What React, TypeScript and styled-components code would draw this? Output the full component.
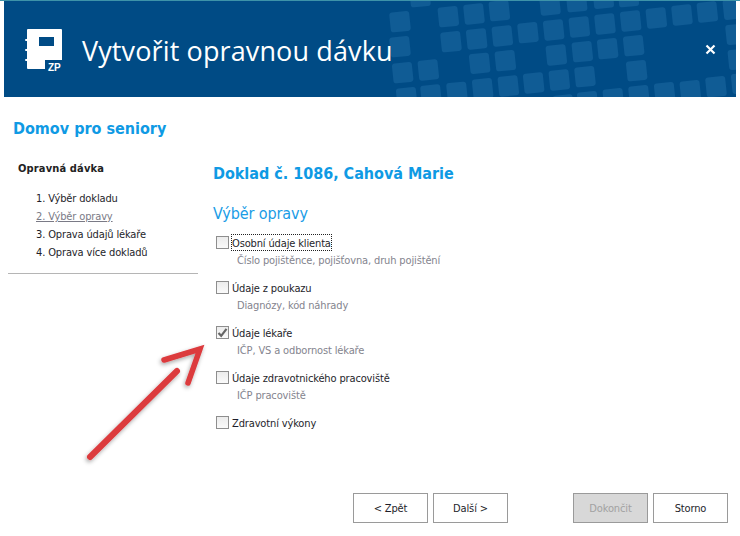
import React from "react";
import styled, { createGlobalStyle } from "styled-components";

const Global = createGlobalStyle`
  html, body { margin: 0; padding: 0; background: #fff; }
  body { font-family: "DejaVu Sans Condensed", "DejaVu Sans", sans-serif; font-size: 11px; letter-spacing: -0.14px; color: #1e1e2a; }
`;

const Page = styled.div`
  position: relative;
  width: 740px;
  height: 536px;
  overflow: hidden;
  background: #fff;
  display: flex;
  flex-direction: column;
`;
const Accent = styled.div`
  height: 1px;
  background: #3d93a9;
  flex: none;
`;
const Header = styled.header`
  position: relative;
  flex: none;
  height: 96px;
  margin: 0 4px;
  background: #004b85;
  display: flex;
  align-items: center;
  padding-left: 21px;
  gap: 17px;
  overflow: hidden;
`;
const Pattern = styled.svg`
  position: absolute;
  left: 0;
  top: -1px;
`;
const Logo = styled.svg`
  position: relative;
  flex: none;
  margin-top: 4px;
`;
const Title = styled.h1`
  position: relative;
  margin: 2px 0 0;
  font: 400 27px "Open Sans", sans-serif;
  letter-spacing: 0.12px;
  color: #fff;
`;
const Close = styled.svg`
  position: absolute;
  right: 20px;
  top: 43px;
`;
const Org = styled.h2`
  margin: 22px 0 0 13px;
  font: 700 16px/20px "DejaVu Sans Condensed", "DejaVu Sans", sans-serif;
  letter-spacing: 0;
  color: #0f9ae4;
`;
const Body = styled.div`
  display: flex;
  padding: 0 8px;
  margin-top: 15px;
`;
const Side = styled.nav`
  width: 190px;
  height: 120px;
  flex: none;
  box-sizing: border-box;
  padding: 8px 0 0 10px;
  border-bottom: 1px solid #b5b5b5;
`;
const SideTitle = styled.div`
  font-weight: 700;
  line-height: 14px;
  letter-spacing: 0.15px;
  color: #222;
`;
const Steps = styled.ol`
  list-style: none;
  margin: 14px 0 0;
  padding: 0 0 0 18px;
`;
const Step = styled.li<{ $active?: boolean }>`
  line-height: 18px;
  height: 18px;
  color: ${(p) => (p.$active ? "#7a7a86" : "#1e1e2a")};
  text-decoration: ${(p) => (p.$active ? "underline" : "none")};
`;
const Main = styled.main`
  margin-left: 15px;
  flex: 1;
  padding-top: 8px;
`;
const DocTitle = styled.h3`
  margin: 0;
  font: 700 16px/24px "DejaVu Sans Condensed", "DejaVu Sans", sans-serif;
  letter-spacing: -0.02px;
  color: #0f9ae4;
`;
const Section = styled.h4`
  margin: 17px 0 0;
  font: 400 16px/22px "DejaVu Sans Condensed", "DejaVu Sans", sans-serif;
  letter-spacing: -0.1px;
  color: #1a9ce6;
`;
const Options = styled.div`
  margin-top: 10px;
  display: flex;
  flex-direction: column;
  gap: 11px;
`;
const Option = styled.div`
  display: grid;
  grid-template-columns: 13px 1fr;
  grid-template-rows: 15px 15px;
  align-content: start;
  column-gap: 3px;
  margin-left: 3px;
  height: 34px;
`;
const Box = styled.span`
  box-sizing: border-box;
  width: 13px;
  height: 13px;
  margin-top: 1px;
  border: 1px solid #8e8e8e;
  background: linear-gradient(#ececec, #fafafa);
  display: flex;
  align-items: center;
  justify-content: center;
`;
const Label = styled.span<{ $focus?: boolean }>`
  justify-self: start;
  line-height: 17px;
  height: 15px;
  outline: ${(p) => (p.$focus ? "1px dotted #222" : "none")};
`;
const Hint = styled.span`
  grid-column: 2;
  margin: 2px 0 0 5px;
  line-height: 17px;
  color: #84848e;
`;
const Footer = styled.footer`
  margin-top: auto;
  padding: 0 12px 13px 353px;
  display: flex;
  gap: 5px;
`;
const Btn = styled.button<{ $gapLeft?: boolean }>`
  width: 75px;
  height: 30px;
  box-sizing: border-box;
  padding: 0;
  border: 1px solid #9a9a9a;
  background: #fff;
  font: inherit;
  letter-spacing: inherit;
  color: #1e1e2a;
  margin-left: ${(p) => (p.$gapLeft ? "60px" : "0")};
  &:disabled { background: #d8d8d8; color: #a2a2a2; }
`;
const Arrow = styled.svg`
  position: absolute;
  left: 70px;
  top: 330px;
`;

const SQ: [number, number][] = [
  [145,50],[222,42],[298,32],[0,65],[153,125],[230,117],[307,108],[384,98],[461,90],[538,81],[615,72],[692,63],[769,54],[846,45],[922,36],[1000,28],
  [0,140],[469,165],[547,155],[623,146],[701,137],[1008,103],[239,190],[316,182],[1015,178],[8,218],[85,210],[710,212],[555,230],[478,240],[401,249],[325,258],[248,266],[171,277],[93,285],[20,293],
  [490,315],[563,305],[640,296],[717,287],[794,278],[871,272],[948,260],[1025,250],[450,15],[530,5],[610,-5],[685,-10],[60,-10],
];

const options = [
  { label: "Osobní údaje klienta", hint: "Číslo pojištěnce, pojišťovna, druh pojištění", focus: true },
  { label: "Údaje z poukazu", hint: "Diagnózy, kód náhrady" },
  { label: "Údaje lékaře", hint: "IČP, VS a odbornost lékaře", checked: true },
  { label: "Údaje zdravotnického pracoviště", hint: "IČP pracoviště" },
  { label: "Zdravotní výkony" },
];

export default function App() {
  return (
    <Page>
      <Global />
      <Accent />
      <Header>
        <Pattern width="732" height="98" viewBox="4 0 732 98">
          {SQ.map(([x, y], i) => {
            const cx = 400 + x / 3;
            const cy = y / 3;
            return (
              <rect key={i} x={cx - 10} y={cy - 10} width="20" height="20" rx="3" fill="#105c95" transform={`rotate(-6 ${cx} ${cy})`} />
            );
          })}
        </Pattern>
        <Logo width="40" height="44" viewBox="0 0 40 44">
          <path fill="#fff" fillRule="evenodd" d="M3 0h33a1 1 0 0 1 1 1v30H20v9H3a1 1 0 0 1-1-1V1a1 1 0 0 1 1-1zM14 8v9h15V8z" />
          <path stroke="#fff" strokeWidth="2" strokeLinecap="round" d="M1 11h3M1 21h3M1 31h3" />
          <text x="23" y="42" fill="#fff" fontFamily="'Liberation Sans', sans-serif" fontWeight="700" fontSize="10">ZP</text>
        </Logo>
        <Title>Vytvořit opravnou dávku</Title>
        <Close width="11" height="11" viewBox="0 0 11 11">
          <path d="M1.5 1.5l8 8M9.5 1.5l-8 8" stroke="#fff" strokeWidth="2.2" />
        </Close>
      </Header>
      <Org>Domov pro seniory</Org>
      <Body>
        <Side>
          <SideTitle>Opravná dávka</SideTitle>
          <Steps>
            <Step>1. Výběr dokladu</Step>
            <Step $active>2. Výběr opravy</Step>
            <Step>3. Oprava údajů lékaře</Step>
            <Step>4. Oprava více dokladů</Step>
          </Steps>
        </Side>
        <Main>
          <DocTitle>Doklad č. 1086, Cahová Marie</DocTitle>
          <Section>Výběr opravy</Section>
          <Options>
            {options.map((o) => (
              <Option key={o.label}>
                <Box>
                  {o.checked && (
                    <svg width="11" height="11" viewBox="0 0 11 11">
                      <path d="M1.5 6l2.7 2.8L9.5 1.8" fill="none" stroke="#666" strokeWidth="2.2" />
                    </svg>
                  )}
                </Box>
                <Label $focus={o.focus}>{o.label}</Label>
                {o.hint && <Hint>{o.hint}</Hint>}
              </Option>
            ))}
          </Options>
        </Main>
      </Body>
      <Footer>
        <Btn>&lt; Zpět</Btn>
        <Btn>Další &gt;</Btn>
        <Btn $gapLeft disabled>Dokončit</Btn>
        <Btn>Storno</Btn>
      </Footer>
      <Arrow width="150" height="140" viewBox="70 330 150 140">
        <defs>
          <filter id="sh" x="-20%" y="-20%" width="140%" height="140%">
            <feDropShadow dx="-1" dy="2" stdDeviation="2" floodColor="#000" floodOpacity="0.35" />
          </filter>
        </defs>
        <g filter="url(#sh)" fill="none" stroke="#dc3a3e" strokeLinecap="round" strokeLinejoin="miter">
          <path d="M90 457L177 371" strokeWidth="6" />
          <path d="M164 360L200 349L188 383" strokeWidth="5.5" />
        </g>
      </Arrow>
    </Page>
  );
}
